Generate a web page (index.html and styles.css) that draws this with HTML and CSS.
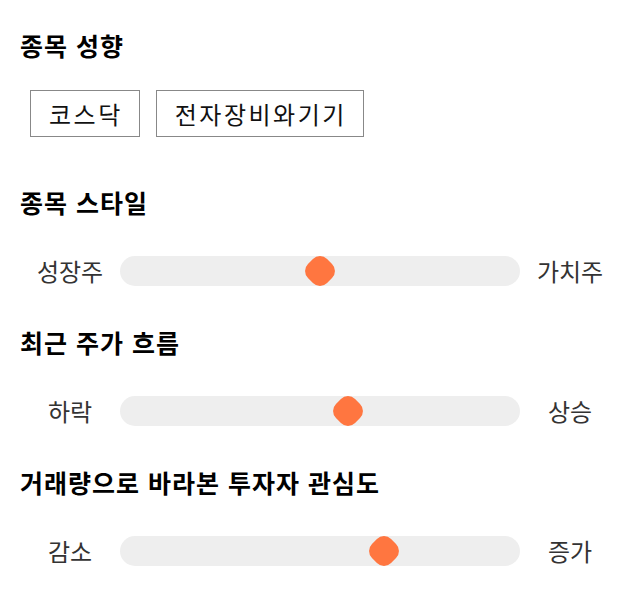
FILE: index.html
```html
<!DOCTYPE html>
<html lang="ko">
<head>
  <meta charset="UTF-8">
  <title>종목 분석</title>
  <link rel="stylesheet" href="styles.css">
</head>
<body>
  <div id="container">
    <section class="section">
      <h2 class="section-title">종목 성향</h2>
      <div class="chip-list">
        <span class="chip">코스닥</span>
        <span class="chip">전자장비와기기</span>
      </div>
    </section>

    <section class="section">
      <h2 class="section-title">종목 스타일</h2>
      <div class="slider-row">
        <span class="slider-label">성장주</span>
        <div class="track"><span class="thumb" style="left: 50%"></span></div>
        <span class="slider-label">가치주</span>
      </div>
    </section>

    <section class="section">
      <h2 class="section-title">최근 주가 흐름</h2>
      <div class="slider-row">
        <span class="slider-label">하락</span>
        <div class="track"><span class="thumb" style="left: 57%"></span></div>
        <span class="slider-label">상승</span>
      </div>
    </section>

    <section class="section">
      <h2 class="section-title">거래량으로 바라본 투자자 관심도</h2>
      <div class="slider-row">
        <span class="slider-label">감소</span>
        <div class="track"><span class="thumb" style="left: 66%"></span></div>
        <span class="slider-label">증가</span>
      </div>
    </section>
  </div>
</body>
</html>
```

FILE: styles.css
```css
body {
  margin: 0;
  padding: 0;
  background-color: #ffffff;
  color: #111111;
  font-family: "Noto Sans CJK KR", "Noto Sans", sans-serif;
}

#container {
  padding: 29px 20px 20px 20px;
}

.section-title {
  margin: 0;
  font-size: 25px;
  letter-spacing: 1px;
  line-height: 32px;
  font-weight: bold;
  color: #000000;
}

/* 종목 성향 */
.chip-list {
  display: flex;
  gap: 16px;
  padding-left: 10px;
  margin-top: 29px;
  margin-bottom: 49px;
}

.chip {
  border: 1px solid #888888;
  padding: 0 16px 0 18px;
  font-size: 24px;
  letter-spacing: 2.5px;
  line-height: 45px;
  color: #111111;
}

/* 슬라이더 */
.slider-row {
  display: grid;
  grid-template-columns: 100px 1fr 100px;
  align-items: center;
  margin-top: 38px;
  margin-bottom: 40px;
}

.slider-label {
  text-align: center;
  font-size: 24px;
  line-height: 30px;
  color: #333333;
}

.track {
  position: relative;
  height: 30px;
  border-radius: 15px;
  background-color: #eeeeee;
}

.thumb {
  position: absolute;
  top: 50%;
  width: 27px;
  height: 27px;
  border-radius: 10px;
  background-color: #ff7640;
  transform: translate(-50%, -50%) rotate(45deg);
}
```
